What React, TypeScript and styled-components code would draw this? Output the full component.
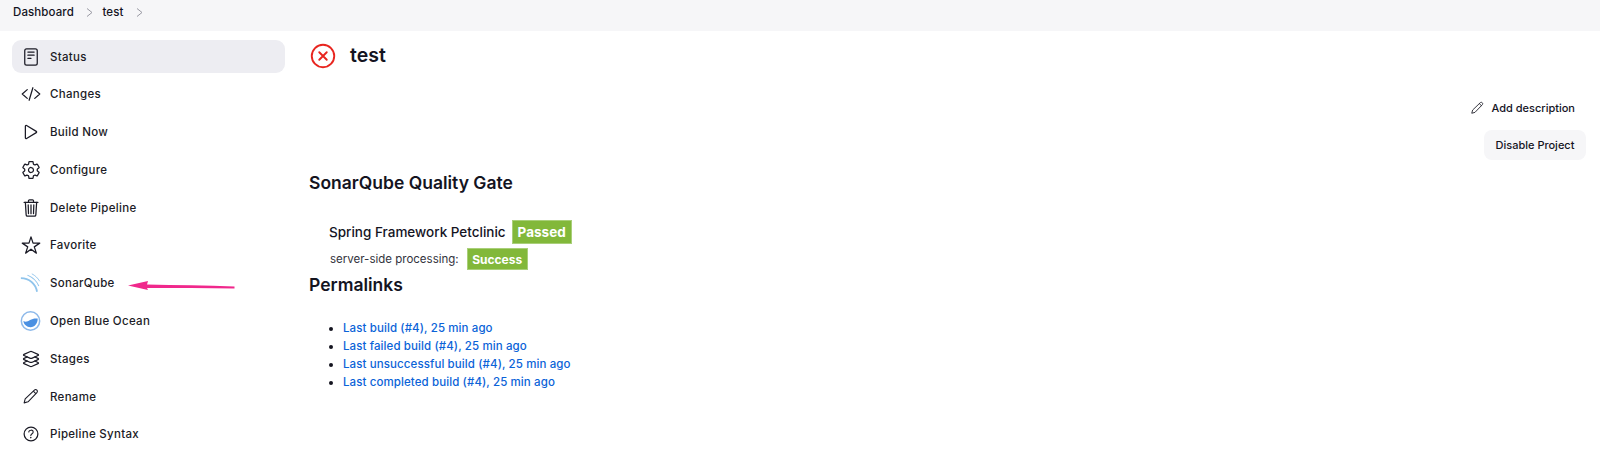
import React from 'react';
import styled, { createGlobalStyle } from 'styled-components';
import {
  IoCloseCircleOutline,
  IoCodeSlashOutline,
  IoHelpCircleOutline,
  IoLayersOutline,
  IoPlayOutline,
  IoReaderOutline,
  IoSettingsOutline,
  IoStarOutline,
  IoTrashOutline,
} from 'react-icons/io5';

const GlobalStyle = createGlobalStyle`
  html, body {
    margin: 0;
    background: #fff;
    color: #14141f;
    font-family: Inter, "Liberation Sans", sans-serif;
    overflow: hidden;
  }
`;

const Page = styled.div`
  position: relative;
  width: 1600px;
  height: 455px;
  overflow: hidden;
`;

const Breadcrumbs = styled.nav`
  display: flex;
  align-items: center;
  height: 31px;
  padding: 0 0 7px 13px;
  box-sizing: border-box;
  background: #f6f6f8;
  font-size: 11.5px;
  font-weight: 500;
`;

const Crumb = styled.span`
  margin-right: 12.5px;
  letter-spacing: 0.1px;
`;

const CrumbArrow = styled.svg`
  width: 7px;
  height: 9px;
  margin-right: 9px;
  fill: none;
  stroke: #9a9aa3;
  stroke-width: 1;
`;

const Body = styled.div`
  display: flex;
`;

const Sidebar = styled.aside`
  width: 273px;
  margin: 9px 0 0 12px;
  flex: none;
  display: flex;
  flex-direction: column;
  gap: 4.8px;
`;

const SideItem = styled.a<{ $active?: boolean }>`
  display: flex;
  align-items: center;
  height: 33px;
  padding-left: 8px;
  border-radius: 9px;
  background: ${p => (p.$active ? '#ededf2' : 'transparent')};
  font-size: 11.5px;
  font-weight: 500;
  color: #1b1b26;
  letter-spacing: 0.3px;
`;

const SideIcon = styled.span`
  display: flex;
  align-items: center;
  justify-content: center;
  width: 21px;
  margin-right: 9px;
  font-size: 20px;
  color: #1b1b26;
`;

const Main = styled.main`
  flex: 1;
  padding: 11px 14px 0 24px;
  min-width: 0;
`;

const TitleRow = styled.div`
  display: flex;
  align-items: center;
  height: 28px;
`;

const StatusIcon = styled(IoCloseCircleOutline)`
  width: 30px;
  height: 30px;
  margin: 0 12px 0 -1px;
  color: #e8251f;
`;

const Title = styled.h1`
  margin: -2px 0 0;
  font-size: 19.5px;
  font-weight: 600;
  color: #14141f;
`;

const Actions = styled.div`
  display: flex;
  flex-direction: column;
  align-items: flex-end;
  margin-top: 26px;
`;

const AddDescription = styled.a`
  display: flex;
  align-items: center;
  gap: 7px;
  height: 24px;
  margin-right: 11px;
  font-size: 11px;
  font-weight: 500;
`;

const PencilGlyph = styled.svg<{ $size: number }>`
  width: ${p => p.$size}px;
  height: ${p => p.$size}px;
  fill: none;
  stroke: #1b1b26;
  stroke-width: 1.5;
  stroke-linejoin: round;
`;

const DisableButton = styled.button`
  height: 30px;
  width: 102px;
  margin-top: 10px;
  padding: 0;
  border: 0;
  border-radius: 8px;
  background: #f6f6f8;
  color: #14141f;
  font: 500 11px Inter, "Liberation Sans", sans-serif;
`;

const SectionTitle = styled.h2`
  margin: 0;
  font-size: 17.5px;
  line-height: 24px;
  font-weight: 600;
  color: #14141f;
`;

const GateTitle = styled(SectionTitle)`
  margin-top: 11px;
`;

const GateRow = styled.div<{ $indent: number; $top: number }>`
  display: flex;
  align-items: center;
  margin: ${p => p.$top}px 0 0 ${p => p.$indent}px;
`;

const ProjectName = styled.span`
  font-size: 13.5px;
  font-weight: 500;
  margin-right: 6px;
`;

const TaskName = styled.span`
  font-size: 11.5px;
  color: #33333d;
  margin-right: 8px;
`;

const Badge = styled.span<{ $small?: boolean }>`
  display: flex;
  align-items: center;
  justify-content: center;
  box-sizing: border-box;
  height: ${p => (p.$small ? 22 : 24)}px;
  width: ${p => (p.$small ? 61 : 60)}px;
  border: 1px solid #a9cf79;
  background: #82b83a;
  color: #fff;
  font-size: ${p => (p.$small ? 12 : 13.5)}px;
  font-weight: 700;
`;

const PermalinksTitle = styled(SectionTitle)`
  margin-top: 3px;
`;

const LinkList = styled.ul`
  margin: 22px 0 0;
  padding: 0 0 0 34px;
  font-size: 11.5px;
  line-height: 18px;
`;

const LinkItem = styled.li`
  color: #14141f;
`;

const PermaLink = styled.a`
  color: #0b63d8;
  font-weight: 500;
  letter-spacing: 0.1px;
`;

const ArrowOverlay = styled.svg`
  position: absolute;
  left: 126px;
  top: 276px;
  width: 110px;
  height: 20px;
`;

const PencilIcon = ({ size }: { size: number }) => (
  <PencilGlyph $size={size} viewBox="0 0 24 24">
    <path d="M3 21 4.500 15.500 17.500 3C18.500 2 20 2 21 3C22 4 22 5.500 21 6.500L8.500 19.500Z" />
    <path d="M16 4.500 19.500 8" />
  </PencilGlyph>
);

const SonarIcon = () => (
  <svg width="24" height="24" viewBox="0 0 24 24" fill="none" stroke="#8fc4ec">
    <path d="M1 6.500C10.500 6.500 18 13 19.500 22" strokeWidth="2" />
    <path d="M8.500 3C14.500 5.500 19.500 10.500 21.500 15.500" strokeWidth="1.2" />
    <path d="M13.500 1.500C17.500 3.500 20.500 6.500 22.500 10" strokeWidth="1" />
  </svg>
);

const OceanIcon = () => (
  <svg width="22" height="22" viewBox="0 0 22 22">
    <circle cx="11" cy="11" r="9.6" fill="#fff" stroke="#8db9ea" strokeWidth="1.6" />
    <path
      d="M3.500 11C6 12.500 8 11.500 10.500 10C13 8.500 16 8 18.500 8.500C18.800 13.500 15.500 17.500 11 17.500C7 17.500 4 14.500 3.500 11Z"
      fill="#4a90e2"
    />
  </svg>
);

const sideItems: { label: string; icon: React.ReactNode }[] = [
  { label: 'Status', icon: <IoReaderOutline /> },
  { label: 'Changes', icon: <IoCodeSlashOutline /> },
  { label: 'Build Now', icon: <IoPlayOutline /> },
  { label: 'Configure', icon: <IoSettingsOutline /> },
  { label: 'Delete Pipeline', icon: <IoTrashOutline /> },
  { label: 'Favorite', icon: <IoStarOutline /> },
  { label: 'SonarQube', icon: <SonarIcon /> },
  { label: 'Open Blue Ocean', icon: <OceanIcon /> },
  { label: 'Stages', icon: <IoLayersOutline /> },
  { label: 'Rename', icon: <PencilIcon size={17} /> },
  { label: 'Pipeline Syntax', icon: <IoHelpCircleOutline /> },
];

const permalinks = [
  'Last build (#4), 25 min ago',
  'Last failed build (#4), 25 min ago',
  'Last unsuccessful build (#4), 25 min ago',
  'Last completed build (#4), 25 min ago',
];

export default function App() {
  return (
    <Page>
      <GlobalStyle />
      <Breadcrumbs>
        <Crumb>Dashboard</Crumb>
        <CrumbArrow viewBox="0 0 7 9">
          <path d="M1 .5 6 4.500 1 8.500" />
        </CrumbArrow>
        <Crumb>test</Crumb>
        <CrumbArrow viewBox="0 0 7 9">
          <path d="M1 .5 6 4.500 1 8.500" />
        </CrumbArrow>
      </Breadcrumbs>
      <Body>
        <Sidebar>
          {sideItems.map((item, i) => (
            <SideItem key={item.label} $active={i === 0}>
              <SideIcon>{item.icon}</SideIcon>
              {item.label}
            </SideItem>
          ))}
        </Sidebar>
        <Main>
          <TitleRow>
            <StatusIcon />
            <Title>test</Title>
          </TitleRow>
          <Actions>
            <AddDescription>
              <PencilIcon size={14} />
              Add description
            </AddDescription>
            <DisableButton>Disable Project</DisableButton>
          </Actions>
          <GateTitle>SonarQube Quality Gate</GateTitle>
          <GateRow $indent={20} $top={25}>
            <ProjectName>Spring Framework Petclinic</ProjectName>
            <Badge>Passed</Badge>
          </GateRow>
          <GateRow $indent={21} $top={4}>
            <TaskName>server-side processing:</TaskName>
            <Badge $small>Success</Badge>
          </GateRow>
          <PermalinksTitle>Permalinks</PermalinksTitle>
          <LinkList>
            {permalinks.map(text => (
              <LinkItem key={text}>
                <PermaLink>{text}</PermaLink>
              </LinkItem>
            ))}
          </LinkList>
        </Main>
      </Body>
      <ArrowOverlay viewBox="0 0 110 20">
        <path d="M2 9.500 22 5 21 8.500C50 9 80 9.500 108.500 10.500L108.500 12.500C80 12 50 12 21 12L22 14Z" fill="#f0288c" />
      </ArrowOverlay>
    </Page>
  );
}
